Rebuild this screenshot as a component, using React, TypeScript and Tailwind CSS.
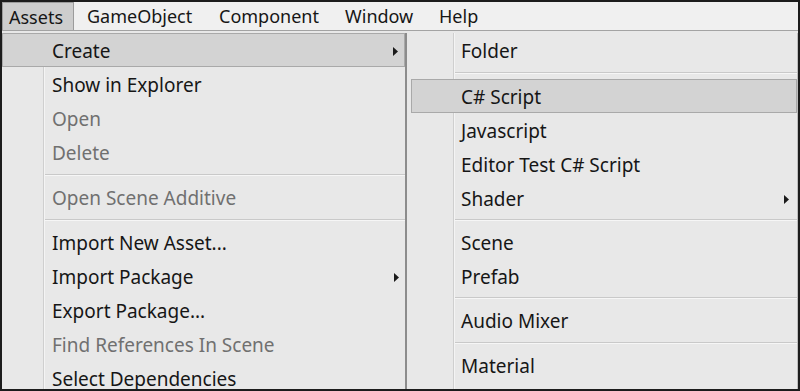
import React from 'react'

type Item = { label?: string; disabled?: boolean; arrow?: boolean; active?: boolean; sep?: number }

const leftItems: Item[] = [
  { label: 'Create', arrow: true, active: true },
  { label: 'Show in Explorer' },
  { label: 'Open', disabled: true },
  { label: 'Delete', disabled: true },
  { sep: 11 },
  { label: 'Open Scene Additive', disabled: true },
  { sep: 11 },
  { label: 'Import New Asset...' },
  { label: 'Import Package', arrow: true },
  { label: 'Export Package...' },
  { label: 'Find References In Scene', disabled: true },
  { label: 'Select Dependencies' },
]

const rightItems: Item[] = [
  { label: 'Folder' },
  { sep: 12 },
  { label: 'C# Script', active: true },
  { label: 'Javascript' },
  { label: 'Editor Test C# Script' },
  { label: 'Shader', arrow: true },
  { sep: 10 },
  { label: 'Scene' },
  { label: 'Prefab' },
  { sep: 10 },
  { label: 'Audio Mixer' },
  { sep: 11 },
  { label: 'Material' },
]

function Arrow() {
  return (
    <svg width="5" height="9" viewBox="0 0 5 9" className="shrink-0">
      <path d="M0 0 L5 4.5 L0 9 Z" fill="#1a1a1a" />
    </svg>
  )
}

function Menu({ items, gutter, arrowPad, indent }: { items: Item[]; gutter: number; arrowPad: string; indent: number }) {
  return (
    <div className="relative h-full">
      {/* gutter line */}
      <div className="absolute top-0 bottom-0 w-[2px] border-l border-[#cfcfcf] bg-[#f4f4f4]" style={{ left: gutter }} />
      {items.map((it, i) =>
        it.sep ? (
          <div key={i} className="flex items-center" style={{ height: it.sep, paddingLeft: gutter + 2 }}>
            <div className="w-full h-[2px] border-t border-[#c9c9c9] bg-[#f6f6f6]" />
          </div>
        ) : (
          <div
            key={i}
            className={`relative flex items-center h-[34px] pt-[2px] ${
              it.active ? 'bg-[#d3d3d3] border border-[#a9a9a9]' : ''
            }`}
          >
            <span
              className={`flex-1 text-[19px] ${it.disabled ? 'text-[#707070]' : 'text-[#161616]'}`}
              style={{ paddingLeft: gutter + indent - (it.active ? 1 : 0) }}
            >
              {it.label}
            </span>
            {it.arrow && (
              <span className={arrowPad}>
                <Arrow />
              </span>
            )}
          </div>
        )
      )}
    </div>
  )
}

export default function App() {
  return (
    <div className="w-[800px] h-[391px] overflow-hidden border-2 border-[#1c1c1c] bg-[#e8e8e8] flex flex-col font-['Noto_Sans',sans-serif] leading-none">
      <div className="h-[29px] shrink-0 bg-[#f0f0f0] border-b border-[#a3a3a3] flex items-stretch text-[18px] text-[#161616]">
        <div className="flex items-center px-[6px] w-[72px] bg-[#cdcdcd] border border-[#9c9c9c] border-b-0">Assets</div>
        <div className="flex items-center ml-[13px] w-[132px]">GameObject</div>
        <div className="flex items-center w-[126px]">Component</div>
        <div className="flex items-center w-[94px]">Window</div>
        <div className="flex items-center">Help</div>
      </div>
      <div className="flex flex-1 pt-[2px]">
        <div className="w-[405px] h-full border-r-2 border-[#8c8c8c]">
          <Menu items={leftItems} gutter={41} indent={9} arrowPad="pr-[6px]" />
        </div>
        <div className="flex-1 h-full border-r border-[#bdbdbd] pl-[4px]">
          <Menu items={rightItems} gutter={42} indent={8} arrowPad="pr-[8px]" />
        </div>
      </div>
    </div>
  )
}
